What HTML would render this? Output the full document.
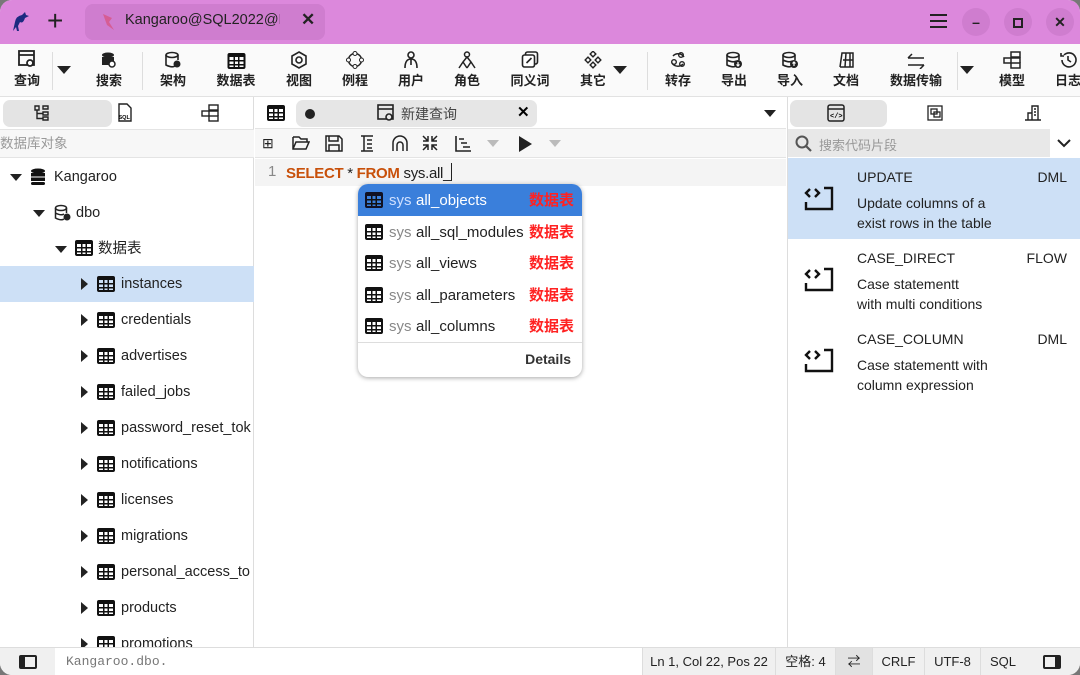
<!DOCTYPE html><html><head><meta charset="utf-8"><style>
*{margin:0;padding:0;box-sizing:border-box}
body{width:1080px;height:675px;background:#777;font-family:"Liberation Sans","Noto Sans CJK SC",sans-serif;overflow:hidden;position:relative}
.win{position:absolute;left:0;top:0;width:1080px;height:675px;border-radius:12px;overflow:hidden;background:#fff}
.a{position:absolute}
.title{left:0;top:0;width:1080px;height:44px;background:#dc88dc}
.tab{left:85px;top:4px;width:240px;height:36px;background:#cf7dcf;border-radius:8px}
.wb{width:28px;height:28px;border-radius:50%;background:#cf7dcf;top:8px;text-align:center;line-height:28px;font-size:14px;font-weight:bold;color:#222}
.tool{top:44px;left:0;width:1080px;height:53px;background:#fafafa;border-bottom:1px solid #e2e2e2}
.ti{position:absolute;top:48px;transform:translateX(-50%);text-align:center;font-size:13px;font-weight:bold;color:#222;white-space:nowrap}
.ti .ic{height:21px;margin:0 auto 1px;display:flex;justify-content:center;align-items:flex-end}
.sep{position:absolute;top:52px;width:1px;height:38px;background:#ddd}
.dd{position:absolute;width:0;height:0;border-left:7px solid transparent;border-right:7px solid transparent;border-top:8px solid #222}
.tb{display:inline-block;width:18px;height:16px;border:2px solid #111;border-top-width:4px;background:linear-gradient(90deg,transparent 4px,#111 4px,#111 5.5px,transparent 5.5px,transparent 8.5px,#111 8.5px,#111 10px,transparent 10px),linear-gradient(180deg,transparent 3px,#111 3px,#111 4.5px,transparent 4.5px,transparent 7px,#111 7px,#111 8.5px,transparent 8.5px);border-radius:2px}
.left{left:0;top:97px;width:254px;height:550px;background:#fff;border-right:1px solid #ddd}
.row{position:absolute;left:0;width:254px;height:36px;font-size:14.5px;color:#222;line-height:36px}
.tri{position:absolute;width:0;height:0}
.tr{border-top:6px solid transparent;border-bottom:6px solid transparent;border-left:7px solid #222;top:12px}
.td{border-left:6px solid transparent;border-right:6px solid transparent;border-top:7px solid #222;top:15px}
.mid{left:255px;top:97px;width:531px;height:550px;background:#fff}
.right{left:787px;top:97px;width:293px;height:550px;background:#fff;border-left:1px solid #ddd}
.status{left:0;top:647px;width:1080px;height:28px;background:#f0f0f0;border-top:1px solid #ddd;font-size:13px;color:#222}
.sc{position:absolute;top:0;height:28px;line-height:28px;border-left:1px solid #ddd;text-align:center}
.pop{left:358px;top:184px;width:224px;height:193px;background:#fff;border-radius:10px;box-shadow:0 1px 5px rgba(0,0,0,.35);overflow:hidden}
.pr{position:absolute;left:0;width:224px;height:31.5px;font-size:15px;line-height:33px;color:#222}
.pr .tb{position:absolute;left:7px;top:8px}
.pr .s{position:absolute;left:31px;color:#888}
.pr .n{position:absolute;left:58px}
.pr .k{position:absolute;right:8px;color:#f22;font-weight:bold}
.sn{position:absolute;left:0;width:293px;height:81px;font-size:14px;color:#222}
.sn .t{position:absolute;left:69px;top:11px}
.sn .c{position:absolute;right:14px;top:11px}
.sn .d{position:absolute;left:69px;top:36px;line-height:19.5px}
.sn svg{position:absolute;left:16px;top:26px}
</style></head><body><div class="win">
<div class="a title"></div>
<svg class="a" style="left:10px;top:10px" width="20" height="22" viewBox="0 0 20 22"><path d="M3 21 L5 12 Q6 6 12 5 L15 2 L16 5 L19 6 L15 8 Q13 14 10 12 L8 16 L9 21 L7 21 L6 17 Z" fill="#1c2a80"/></svg>
<div class="a" style="left:47px;top:5px;font-size:28px;line-height:32px;color:#222">+</div>
<div class="a tab"></div>
<svg class="a" style="left:100px;top:12px" width="18" height="20"><path d="M3 2 L12 6 L9 10 L14 18 L7 13 Z" fill="#d8507a" opacity=".7"/></svg>
<div class="a" style="left:125px;top:12px;font-size:14.5px;color:#222;width:155px;overflow:hidden;white-space:nowrap">Kangaroo@SQL2022@Lo</div>
<div class="a" style="left:301px;top:10px;font-size:17px;font-weight:bold;color:#222">✕</div>
<div class="a" style="left:930px;top:14px;width:17px;height:2px;background:#222;box-shadow:0 6px 0 #222,0 12px 0 #222"></div>
<div class="a wb" style="left:962px">–</div>
<div class="a wb" style="left:1004px"><span style="display:inline-block;width:10px;height:10px;border:2.5px solid #222;vertical-align:middle"></span></div>
<div class="a wb" style="left:1046px">✕</div>

<div class="a tool"></div>
<div class="ti" style="left:27px"><div class="ic"><svg width="20" height="20"><rect x="2" y="2" width="15" height="14" fill="none" stroke="#222" stroke-width="1.8"/><line x1="2" y1="6" x2="17" y2="6" stroke="#222" stroke-width="1.8"/><circle cx="13" cy="14" r="3" fill="#fff" stroke="#222" stroke-width="1.8"/></svg></div>查询</div>
<div class="sep" style="left:52px"></div><div class="dd" style="left:57px;top:66px"></div>
<div class="ti" style="left:109px"><div class="ic"><svg width="18" height="18"><ellipse cx="8" cy="4" rx="6" ry="2.5" fill="#222"/><rect x="2" y="6" width="12" height="8" fill="#222"/><circle cx="12" cy="13" r="3" fill="#fff" stroke="#222" stroke-width="1.5"/></svg></div>搜索</div>
<div class="sep" style="left:142px"></div>
<div class="ti" style="left:173px"><div class="ic"><svg width="18" height="18"><ellipse cx="8" cy="4" rx="6" ry="2.5" fill="none" stroke="#222" stroke-width="1.6"/><path d="M2 4 V14 Q8 17 11 15 M14 4 V9" fill="none" stroke="#222" stroke-width="1.6"/><circle cx="13" cy="13" r="3.5" fill="#222"/></svg></div>架构</div>
<div class="ti" style="left:236px"><div class="ic"><span class="tb"></span></div>数据表</div>
<div class="ti" style="left:299px"><div class="ic"><svg width="18" height="18"><path d="M9 1 L16 5 V13 L9 17 L2 13 V5 Z" fill="none" stroke="#222" stroke-width="1.6"/><circle cx="9" cy="9" r="3" fill="none" stroke="#222" stroke-width="1.6"/></svg></div>视图</div>
<div class="ti" style="left:355px"><div class="ic"><svg width="18" height="18"><circle cx="9" cy="9" r="6.5" fill="none" stroke="#222" stroke-width="1.5"/><circle cx="9" cy="2.5" r="2" fill="#fff" stroke="#222"/><circle cx="15.5" cy="9" r="2" fill="#fff" stroke="#222"/><circle cx="2.5" cy="9" r="2" fill="#fff" stroke="#222"/><circle cx="9" cy="15.5" r="2" fill="#fff" stroke="#222"/></svg></div>例程</div>
<div class="ti" style="left:411px"><div class="ic"><svg width="18" height="18"><circle cx="9" cy="4" r="3" fill="none" stroke="#222" stroke-width="1.6"/><path d="M3 17 Q3 8 9 8 Q15 8 15 17 M9 8 V14" fill="none" stroke="#222" stroke-width="1.6"/></svg></div>用户</div>
<div class="ti" style="left:467px"><div class="ic"><svg width="18" height="18"><circle cx="9" cy="3.5" r="2.5" fill="none" stroke="#222" stroke-width="1.5"/><path d="M5 11 L9 6 L13 11 M1 17 L5 11 L9 17 M9 17 L13 11 L17 17" fill="none" stroke="#222" stroke-width="1.5"/></svg></div>角色</div>
<div class="ti" style="left:530px"><div class="ic"><svg width="18" height="18"><rect x="4" y="1" width="12" height="12" rx="2" fill="none" stroke="#222" stroke-width="1.6"/><rect x="1" y="4" width="12" height="12" rx="2" fill="#fff" stroke="#222" stroke-width="1.6"/><path d="M5 12 L10 7" stroke="#222" stroke-width="1.6"/></svg></div>同义词</div>
<div class="ti" style="left:593px"><div class="ic"><svg width="18" height="18"><g fill="none" stroke="#222" stroke-width="1.4"><rect x="7" y="1" width="4" height="4" transform="rotate(45 9 3)"/><rect x="2" y="7" width="4" height="4" transform="rotate(45 4 9)"/><rect x="12" y="7" width="4" height="4" transform="rotate(45 14 9)"/><rect x="7" y="12" width="4" height="4" transform="rotate(45 9 14)"/></g></svg></div>其它</div>
<div class="dd" style="left:613px;top:66px"></div>
<div class="sep" style="left:647px"></div>
<div class="ti" style="left:678px"><div class="ic"><svg width="18" height="18"><path d="M4 5 A7 7 0 0 1 15 6 M14 13 A7 7 0 0 1 3 12" fill="none" stroke="#222" stroke-width="1.5"/><circle cx="5" cy="11" r="2.3" fill="none" stroke="#222" stroke-width="1.4"/><circle cx="12" cy="4" r="2.3" fill="none" stroke="#222" stroke-width="1.4"/><circle cx="13" cy="13" r="2.3" fill="none" stroke="#222" stroke-width="1.4"/></svg></div>转存</div>
<div class="ti" style="left:734px"><div class="ic"><svg width="18" height="18"><ellipse cx="8" cy="4" rx="6" ry="2.5" fill="none" stroke="#222" stroke-width="1.6"/><path d="M2 4 V14 Q8 17 11 15 M14 4 V9 M2 9 Q8 12 11 10" fill="none" stroke="#222" stroke-width="1.6"/><circle cx="13" cy="13" r="4" fill="#222"/><path d="M13 11 V15 M11.5 13.5 L13 15 L14.5 13.5" stroke="#fff" stroke-width="1.2" fill="none"/></svg></div>导出</div>
<div class="ti" style="left:790px"><div class="ic"><svg width="18" height="18"><ellipse cx="8" cy="4" rx="6" ry="2.5" fill="none" stroke="#222" stroke-width="1.6"/><path d="M2 4 V14 Q8 17 11 15 M14 4 V9 M2 9 Q8 12 11 10" fill="none" stroke="#222" stroke-width="1.6"/><circle cx="13" cy="13" r="4" fill="#222"/><path d="M13 15 V11 M11.5 12.5 L13 11 L14.5 12.5" stroke="#fff" stroke-width="1.2" fill="none"/></svg></div>导入</div>
<div class="ti" style="left:846px"><div class="ic"><svg width="18" height="18"><path d="M3 16 L5 2 H16 V16 H3 M9 2 L8 16 M13 2 V16 M6 9 H16" fill="none" stroke="#222" stroke-width="1.5"/></svg></div>文档</div>
<div class="ti" style="left:916px"><div class="ic"><svg width="20" height="16"><path d="M2 5 H18 M2 5 L6 1 M18 12 H2 M18 12 L14 16" fill="none" stroke="#222" stroke-width="1.5"/></svg></div>数据传输</div>
<div class="sep" style="left:957px"></div><div class="dd" style="left:960px;top:66px"></div>
<div class="ti" style="left:1012px"><div class="ic"><svg width="18" height="18"><rect x="8" y="1" width="9" height="5" fill="none" stroke="#222" stroke-width="1.5"/><rect x="1" y="7" width="7" height="5" fill="none" stroke="#222" stroke-width="1.5"/><rect x="8" y="12" width="9" height="5" fill="none" stroke="#222" stroke-width="1.5"/><path d="M8 7 H17 V12" fill="none" stroke="#222" stroke-width="1.5"/></svg></div>模型</div>
<div class="ti" style="left:1068px"><div class="ic"><svg width="18" height="18"><path d="M3 9 A7 7 0 1 0 5 4 M2 2 V5 H5 M9 5 V9 L12 11" fill="none" stroke="#222" stroke-width="1.6"/></svg></div>日志</div>

<div class="a left">
<div class="a" style="left:3px;top:3px;width:109px;height:27px;background:#e4e4e4;border-radius:7px"></div>
<svg class="a" style="left:33px;top:7px" width="18" height="18"><path d="M2 2 H6 V6 H2 Z M10 2 H15 V5 H10 Z M10 8 H15 V11 H10 Z M10 13 H15 V16 H10 Z M4 6 V14.5 H10 M4 9.5 H10" fill="none" stroke="#222" stroke-width="1.4"/></svg>
<svg class="a" style="left:117px;top:6px" width="16" height="20"><path d="M2 1 H10 L14 5 V18 H2 Z" fill="none" stroke="#222" stroke-width="1.4"/><text x="1.5" y="16" font-size="5.5" font-family="Liberation Sans" font-weight="bold">SQL</text></svg>
<svg class="a" style="left:201px;top:7px" width="20" height="18"><rect x="8" y="1" width="9" height="5" fill="none" stroke="#222" stroke-width="1.4"/><rect x="1" y="7" width="7" height="5" fill="none" stroke="#222" stroke-width="1.4"/><rect x="8" y="12" width="9" height="5" fill="none" stroke="#222" stroke-width="1.4"/><path d="M8 7 H17 V12" fill="none" stroke="#222" stroke-width="1.4"/></svg>
<div class="a" style="left:0;top:32px;width:254px;height:29px;background:#f7f7f7;border-top:1px solid #e4e4e4;border-bottom:1px solid #e4e4e4;font-size:13.5px;line-height:27px;color:#999">数据库对象</div>
</div>
<div class="row" style="top:159px"><span class="tri td" style="left:10px"></span><svg class="a" style="left:30px;top:9px" width="16" height="18"><ellipse cx="8" cy="3" rx="7" ry="2.5" fill="#111"/><rect x="1" y="5" width="14" height="3.5" fill="#111"/><rect x="1" y="9.5" width="14" height="3.5" fill="#111"/><rect x="1" y="14" width="14" height="3" rx="1.5" fill="#111"/></svg><span class="a" style="left:54px">Kangaroo</span></div>
<div class="row" style="top:195px"><span class="tri td" style="left:33px"></span><svg class="a" style="left:54px;top:9px" width="18" height="18"><ellipse cx="7" cy="4" rx="5.5" ry="2.5" fill="none" stroke="#222" stroke-width="1.5"/><path d="M1.5 4 V14 Q7 17 10 15 M12.5 4 V9 M1.5 9 Q7 12 10 10" fill="none" stroke="#222" stroke-width="1.5"/><circle cx="13" cy="13" r="3.5" fill="#222"/></svg><span class="a" style="left:76px">dbo</span></div>
<div class="row" style="top:231px"><span class="tri td" style="left:55px"></span><span class="tb a" style="left:75px;top:9px"></span><span class="a" style="left:98px">数据表</span></div>
<div class="row" style="top:266px;background:#cde0f6"><span class="tri tr" style="left:81px"></span><span class="tb a" style="left:97px;top:10px"></span><span class="a" style="left:121px">instances</span></div>
<div class="row" style="top:302px"><span class="tri tr" style="left:81px"></span><span class="tb a" style="left:97px;top:10px"></span><span class="a" style="left:121px">credentials</span></div>
<div class="row" style="top:338px"><span class="tri tr" style="left:81px"></span><span class="tb a" style="left:97px;top:10px"></span><span class="a" style="left:121px">advertises</span></div>
<div class="row" style="top:374px"><span class="tri tr" style="left:81px"></span><span class="tb a" style="left:97px;top:10px"></span><span class="a" style="left:121px">failed_jobs</span></div>
<div class="row" style="top:410px"><span class="tri tr" style="left:81px"></span><span class="tb a" style="left:97px;top:10px"></span><span class="a" style="left:121px">password_reset_tok</span></div>
<div class="row" style="top:446px"><span class="tri tr" style="left:81px"></span><span class="tb a" style="left:97px;top:10px"></span><span class="a" style="left:121px">notifications</span></div>
<div class="row" style="top:482px"><span class="tri tr" style="left:81px"></span><span class="tb a" style="left:97px;top:10px"></span><span class="a" style="left:121px">licenses</span></div>
<div class="row" style="top:518px"><span class="tri tr" style="left:81px"></span><span class="tb a" style="left:97px;top:10px"></span><span class="a" style="left:121px">migrations</span></div>
<div class="row" style="top:554px"><span class="tri tr" style="left:81px"></span><span class="tb a" style="left:97px;top:10px"></span><span class="a" style="left:121px">personal_access_to</span></div>
<div class="row" style="top:590px"><span class="tri tr" style="left:81px"></span><span class="tb a" style="left:97px;top:10px"></span><span class="a" style="left:121px">products</span></div>
<div class="row" style="top:626px"><span class="tri tr" style="left:81px"></span><span class="tb a" style="left:97px;top:10px"></span><span class="a" style="left:121px">promotions</span></div>

<div class="a mid">
<div class="a" style="left:0;top:0;width:531px;height:32px;border-bottom:1px solid #e4e4e4"></div>
<span class="tb a" style="left:12px;top:8px"></span>
<div class="a" style="left:41px;top:3px;width:241px;height:27px;background:#e6e6e6;border-radius:7px"></div>
<div class="a" style="left:50px;top:12px;width:10px;height:10px;border-radius:50%;background:#222"></div>
<svg class="a" style="left:121px;top:6px" width="20" height="20"><rect x="2" y="2" width="15" height="14" fill="none" stroke="#222" stroke-width="1.6"/><line x1="2" y1="6" x2="17" y2="6" stroke="#222" stroke-width="1.6"/><circle cx="13" cy="14" r="3" fill="#e6e6e6" stroke="#222" stroke-width="1.6"/></svg>
<div class="a" style="left:146px;top:7px;font-size:14px;color:#444">新建查询</div>
<div class="a" style="left:262px;top:6px;font-size:15px;font-weight:bold">✕</div>
<div class="dd" style="left:509px;top:13px;border-left-width:6px;border-right-width:6px;border-top-width:7px"></div>
<div class="a" style="left:0;top:32px;width:531px;height:29px;background:#f7f7f7;border-bottom:1px solid #e4e4e4"></div>
<div class="a" style="left:0;top:32px;font-size:16px;line-height:29px;color:#222;white-space:nowrap">
<span class="a" style="left:7px;font-size:14px">⊞</span>
<svg class="a" style="left:37px;top:6px" width="18" height="16"><path d="M1 2 H7 L9 4 H15 V7 M1 2 V14 H14 L17 7 H4 L1 14" fill="none" stroke="#222" stroke-width="1.5"/></svg>
<svg class="a" style="left:70px;top:6px" width="18" height="17"><path d="M1 1 H14 L17 4 V16 H1 Z M4 1 V6 H13 V1 M4 16 V10 H14 V16" fill="none" stroke="#222" stroke-width="1.5"/></svg>
<svg class="a" style="left:104px;top:6px" width="16" height="17"><path d="M2 1 H14 M2 16 H14 M5 1 V16 M8 5 H13 M8 9 H13 M8 13 H13" fill="none" stroke="#222" stroke-width="1.5"/></svg>
<svg class="a" style="left:136px;top:6px" width="18" height="17"><path d="M2 16 V8 A7 7 0 0 1 16 8 V16 M6 16 V10 A3 3 0 0 1 12 10 V16" fill="none" stroke="#222" stroke-width="1.5"/></svg>
<svg class="a" style="left:167px;top:6px" width="16" height="16"><path d="M1 6 H6 V1 M6 6 L1 1 M15 6 H10 V1 M10 6 L15 1 M1 10 H6 V15 M6 10 L1 15 M15 10 H10 V15 M10 10 L15 15" fill="none" stroke="#222" stroke-width="1.5"/></svg>
<svg class="a" style="left:199px;top:6px" width="18" height="17"><path d="M2 1 V16 H17 M5 4 H10 M7 8 H13 M9 12 H16" fill="none" stroke="#222" stroke-width="1.6"/></svg>
<div class="dd" style="left:232px;top:11px;border-top-color:#bbb;border-left-width:6px;border-right-width:6px;border-top-width:7px"></div>
<div class="a" style="left:264px;top:7px;width:0;height:0;border-top:8px solid transparent;border-bottom:8px solid transparent;border-left:13px solid #222"></div>
<div class="dd" style="left:294px;top:11px;border-top-color:#bbb;border-left-width:6px;border-right-width:6px;border-top-width:7px"></div>
</div>
<div class="a" style="left:0;top:62px;width:531px;height:27px;background:#f4f4f4"></div>
<div class="a" style="left:13px;top:66px;font-size:15px;color:#888">1</div>
<div class="a" style="left:31px;top:66px;font-size:15px;color:#222;white-space:nowrap;letter-spacing:-.3px"><b style="color:#c8500a">SELECT</b> * <b style="color:#c8500a">FROM</b> sys.all_<span style="display:inline-block;width:1px;height:18px;background:#222;vertical-align:-3px"></span></div>
</div>

<div class="a pop">
<div class="pr" style="top:0;background:#3a7fdb;color:#fff"><span class="tb" style="border-color:#112;"></span><span class="s" style="color:#cfe0ff">sys</span><span class="n">all_objects</span><span class="k">数据表</span></div>
<div class="pr" style="top:31.5px"><span class="tb"></span><span class="s">sys</span><span class="n">all_sql_modules</span><span class="k">数据表</span></div>
<div class="pr" style="top:63px"><span class="tb"></span><span class="s">sys</span><span class="n">all_views</span><span class="k">数据表</span></div>
<div class="pr" style="top:94.5px"><span class="tb"></span><span class="s">sys</span><span class="n">all_parameters</span><span class="k">数据表</span></div>
<div class="pr" style="top:126px"><span class="tb"></span><span class="s">sys</span><span class="n">all_columns</span><span class="k">数据表</span></div>
<div class="a" style="left:0;top:158px;width:224px;height:35px;border-top:1px solid #ddd;text-align:right;padding-right:11px;line-height:32px;font-size:14px;font-weight:bold;color:#333">Details</div>
</div>

<div class="a right">
<div class="a" style="left:2px;top:3px;width:97px;height:27px;background:#e4e4e4;border-radius:7px"></div>
<svg class="a" style="left:39px;top:7px" width="18" height="18"><rect x="1" y="1" width="16" height="16" rx="2" fill="none" stroke="#222" stroke-width="1.5"/><line x1="1" y1="5" x2="17" y2="5" stroke="#222" stroke-width="1.5"/><text x="3" y="14" font-size="7" font-family="Liberation Mono" font-weight="bold">&lt;/&gt;</text></svg>
<svg class="a" style="left:138px;top:7px" width="18" height="18"><rect x="2" y="2" width="14" height="14" fill="none" stroke="#222" stroke-width="1.3"/><rect x="5" y="5" width="6" height="5" fill="none" stroke="#222" stroke-width="1.3"/><rect x="8" y="8" width="6" height="5" fill="none" stroke="#222" stroke-width="1.3"/></svg>
<svg class="a" style="left:236px;top:7px" width="18" height="18"><path d="M1 16 H17 M4 16 V9 H8 M8 16 V2 H14 V16 M10 5 H12 M10 8 H12 M10 11 H12" fill="none" stroke="#222" stroke-width="1.4"/></svg>
<div class="a" style="left:0;top:32px;width:262px;height:28px;background:#e8e8e8"></div>
<svg class="a" style="left:7px;top:38px" width="18" height="18"><circle cx="7" cy="7" r="5.5" fill="none" stroke="#555" stroke-width="2"/><path d="M11 11 L16 16" stroke="#555" stroke-width="2.2"/></svg>
<div class="a" style="left:31px;top:38px;font-size:13px;color:#999">搜索代码片段</div>
<svg class="a" style="left:268px;top:40px" width="16" height="12"><path d="M2 3 L8 9 L14 3" fill="none" stroke="#222" stroke-width="2"/></svg>
<div class="sn" style="top:61px;background:#cde0f6"><svg width="32" height="28"><path d="M6 5 L2 9 L6 13 M11 5 L15 9 L11 13 M20 4 H28 V25 H2 V18" fill="none" stroke="#111" stroke-width="2.4"/></svg><span class="t">UPDATE</span><span class="c">DML</span><span class="d">Update columns of a<br>exist rows in the table</span></div>
<div class="sn" style="top:142px"><svg width="32" height="28"><path d="M6 5 L2 9 L6 13 M11 5 L15 9 L11 13 M20 4 H28 V25 H2 V18" fill="none" stroke="#111" stroke-width="2.4"/></svg><span class="t">CASE_DIRECT</span><span class="c">FLOW</span><span class="d">Case statementt<br>with multi conditions</span></div>
<div class="sn" style="top:223px"><svg width="32" height="28"><path d="M6 5 L2 9 L6 13 M11 5 L15 9 L11 13 M20 4 H28 V25 H2 V18" fill="none" stroke="#111" stroke-width="2.4"/></svg><span class="t">CASE_COLUMN</span><span class="c">DML</span><span class="d">Case statementt with<br>column expression</span></div>
</div>

<div class="a status">
<div class="a" style="left:19px;top:7px;width:18px;height:14px;border:2px solid #222;border-radius:2px;border-left-width:6px"></div>
<div class="a" style="left:55px;top:0;width:587px;height:27px;background:#fff"></div>
<div class="a" style="left:66px;top:0;line-height:27px;font-family:'Liberation Mono',monospace;color:#777">Kangaroo.dbo.</div>
<div class="sc" style="left:642px;width:133px">Ln 1, Col 22, Pos 22</div>
<div class="sc" style="left:775px;width:60px">空格: 4</div>
<div class="sc" style="left:835px;width:37px;background:#e2e2e2">⇄</div>
<div class="sc" style="left:872px;width:52px">CRLF</div>
<div class="sc" style="left:924px;width:56px">UTF-8</div>
<div class="sc" style="left:980px;width:45px">SQL</div>
<div class="a" style="left:1043px;top:7px;width:18px;height:14px;border:2px solid #222;border-radius:2px;border-right-width:6px"></div>
</div>
</div></body></html>
